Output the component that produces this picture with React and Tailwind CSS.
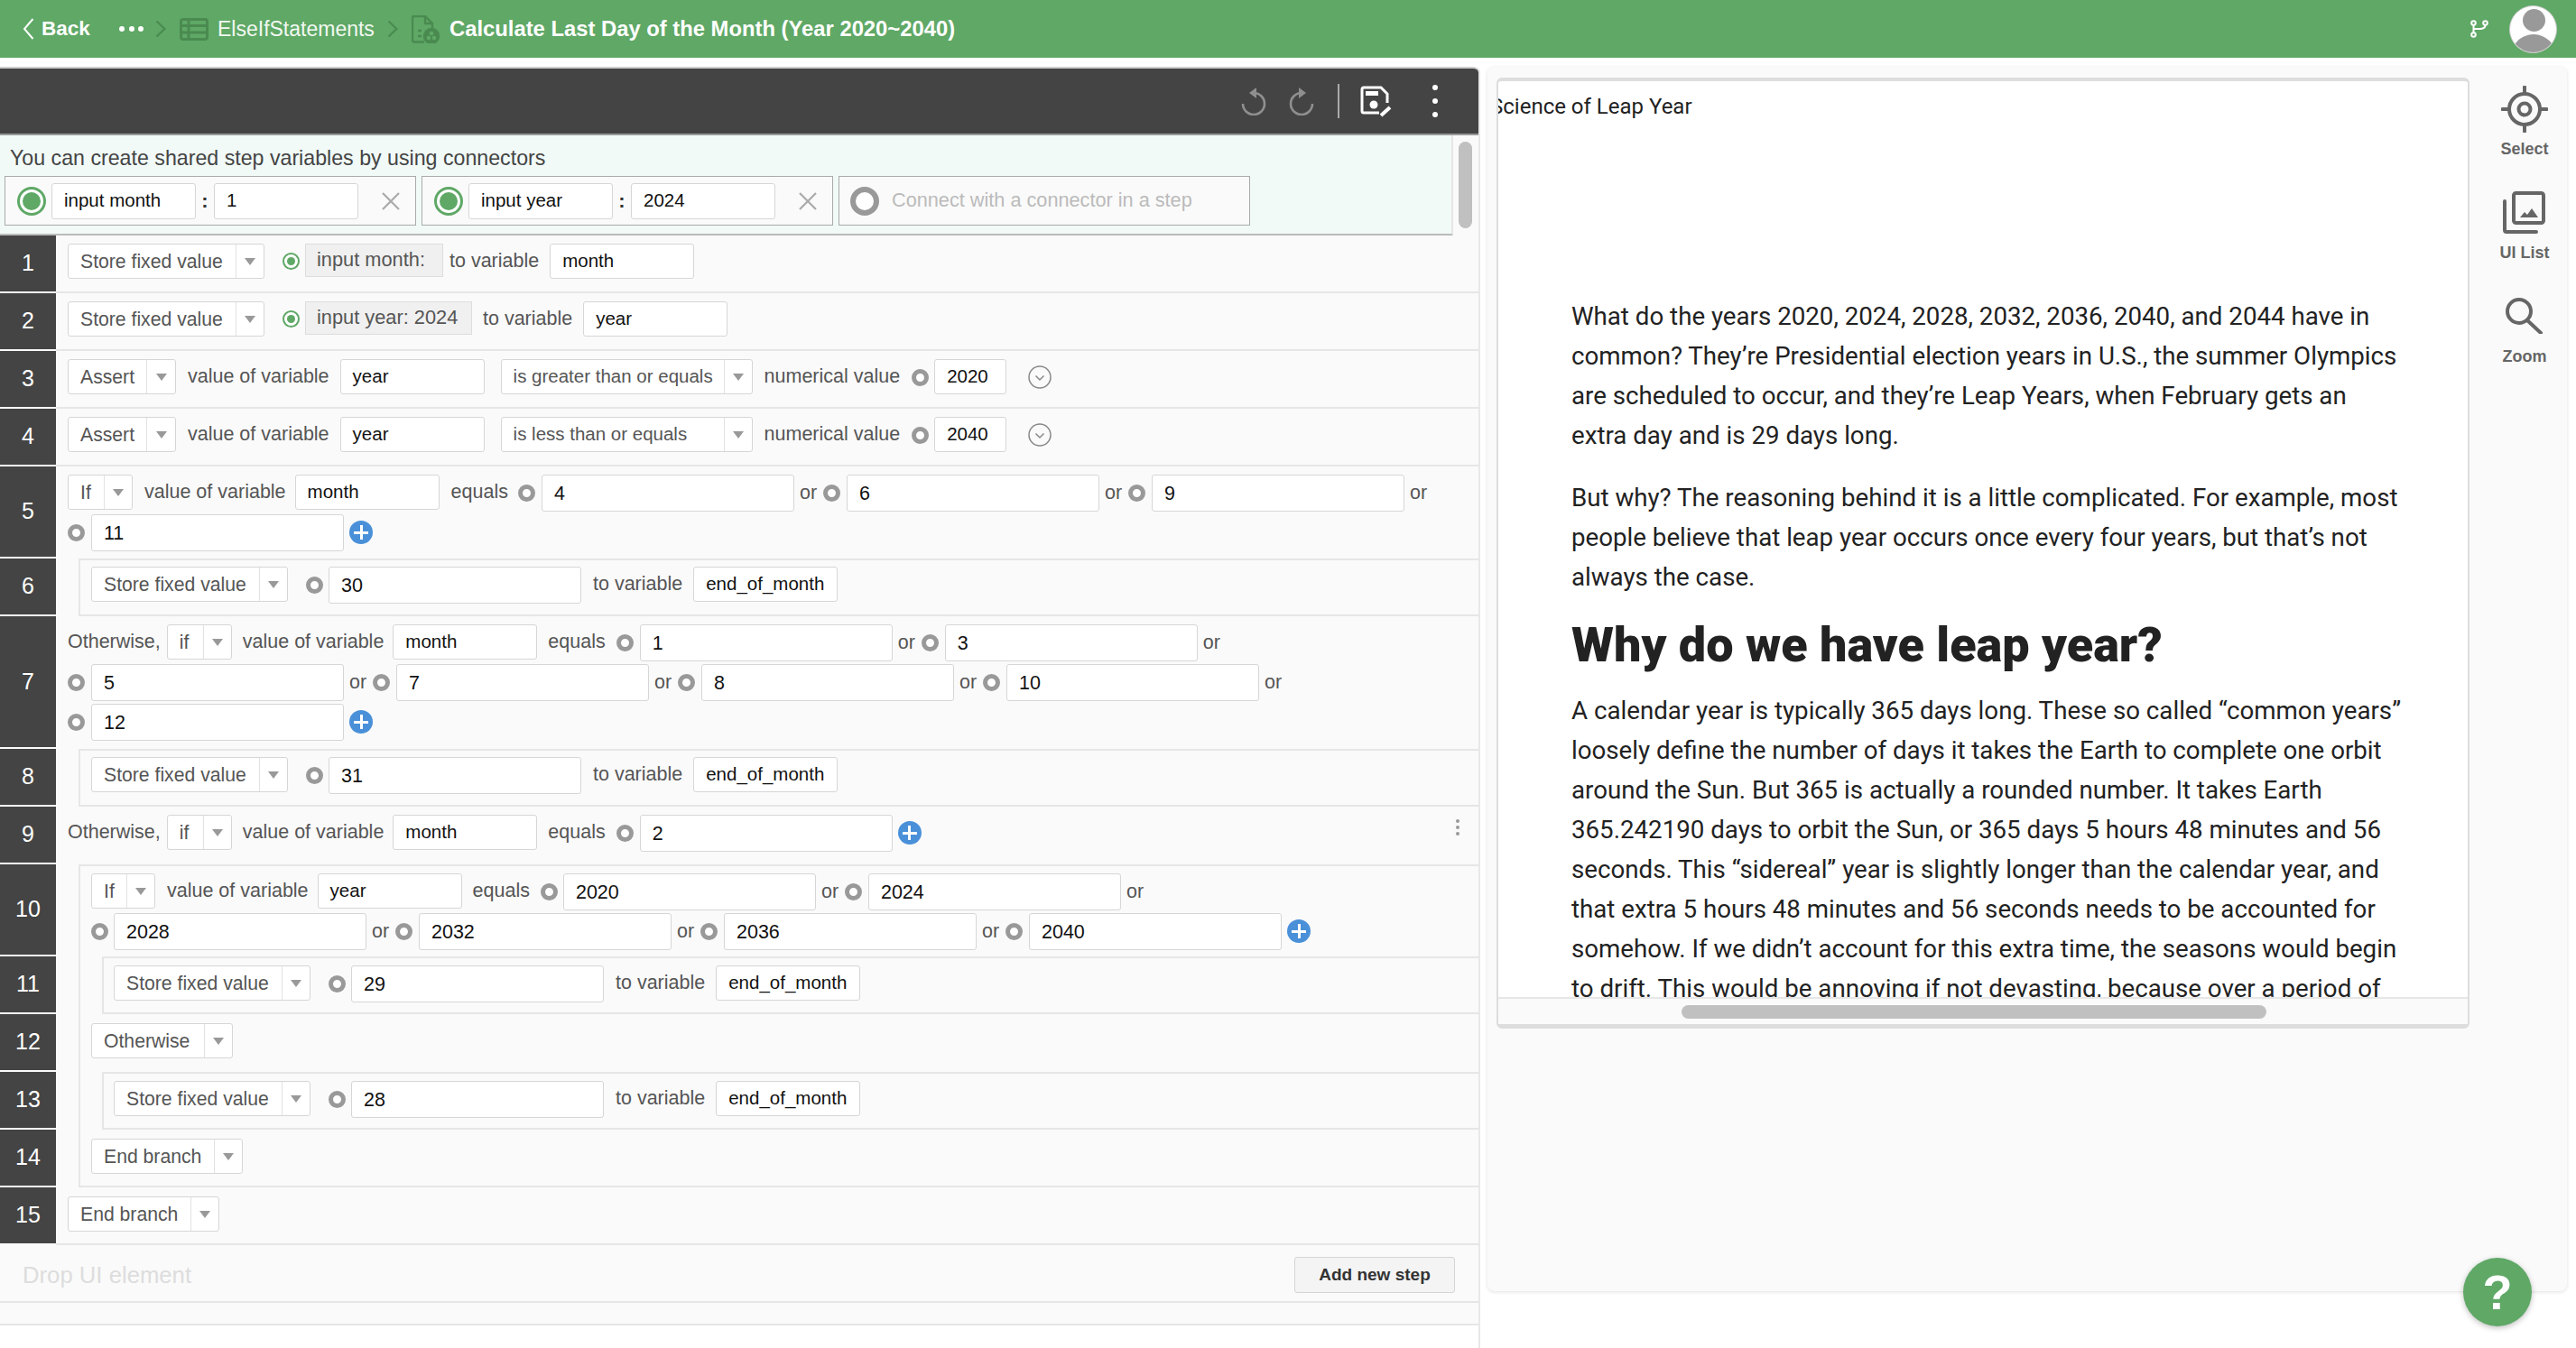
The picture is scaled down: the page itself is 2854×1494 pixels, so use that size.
import React from "react";

const Dot = ({ ml = 0 }) => (
  <span className="w-[19px] h-[19px] mt-[11px] rounded-full border-[5px] border-[#999] bg-white shrink-0" style={ml ? { marginLeft: ml } : undefined} />
);
const GreenDot = () => (
  <span className="w-[19px] h-[19px] mt-[10px] rounded-full border-2 border-[#5fa866] bg-white shrink-0 flex items-center justify-center">
    <span className="w-[9px] h-[9px] rounded-full bg-[#5fa866]" />
  </span>
);
const Sel = ({ w, children, dv = 31, small }) => (
  <div className={"h-[39px] bg-white border border-[#d6d6d6] rounded-[3px] flex items-center shrink-0 text-[#555] leading-none whitespace-nowrap " + (small ? "text-[20.5px]" : "text-[21.2px]")} style={{ width: w }}>
    <span className="flex-1 pl-[13px]">{children}</span>
    <span className="h-full border-l border-[#e2e2e2] flex items-center justify-center shrink-0" style={{ width: dv }}>
      <span className="w-0 h-0 border-l-[6px] border-r-[6px] border-t-[8px] border-l-transparent border-r-transparent border-t-[#999]" />
    </span>
  </div>
);
const Var = ({ w = 160, children }) => (
  <div className="h-[39px] bg-white border border-[#d6d6d6] rounded-[3px] flex items-center pl-[13px] shrink-0 text-[#111] text-[20.5px] leading-none whitespace-nowrap" style={{ width: w }}>{children}</div>
);
const Val = ({ w = 280, children }) => (
  <div className="h-[41px] bg-white border border-[#d6d6d6] rounded-[3px] flex items-center pl-[13px] pt-[3px] shrink-0 text-[#111] text-[21.5px] leading-none" style={{ width: w }}>{children}</div>
);
const L = ({ children }) => (
  <span className="h-[39px] flex items-center text-[#555] text-[21.5px] leading-none whitespace-nowrap shrink-0">{children}</span>
);
const Or = () => <span className="h-[41px] w-[19px] flex items-center text-[#555] text-[21.5px] leading-none pt-[1px] shrink-0">or</span>;
const Plus = () => (
  <span className="w-[26px] h-[26px] mt-[7px] rounded-full bg-[#4a90d9] relative shrink-0">
    <span className="absolute left-[5px] right-[5px] top-[11.5px] h-[3px] bg-white" />
    <span className="absolute top-[5px] bottom-[5px] left-[11.5px] w-[3px] bg-white" />
  </span>
);
const Chev = () => (
  <svg width="28" height="28" viewBox="0 0 28 28" fill="none" stroke="#888" strokeWidth="1.5" className="shrink-0">
    <circle cx="14" cy="14" r="12" />
    <path d="M9.5 12.5 14 17l4.5-4.5" />
  </svg>
);
const Line = ({ children, className = "" }) => <div className={"flex items-start " + className}>{children}</div>;

const Row = ({ n, h = 64, nest = 0, bt, bb, pt = 9, children }) => {
  let inner = (
    <div className={"flex-1 min-w-0 h-full " + (bt ? "border-t-2 border-[#e6e6e6] " : "") + (bb ? "border-b-2 border-[#e6e6e6] " : "") + (nest >= 2 ? "pl-[11px]" : nest === 1 ? "pl-[12px]" : "pl-[13px]")} style={{ paddingTop: bt ? pt - 2 : pt }}>
      {children}
    </div>
  );
  if (nest >= 2) inner = <div className="flex-1 h-full ml-[24px] border-l-2 border-[#e6e6e6] flex">{inner}</div>;
  if (nest >= 1) inner = <div className="flex-1 h-full ml-[25px] border-l-2 border-[#e6e6e6] flex">{inner}</div>;
  return (
    <div className="flex relative" style={{ height: h }}>
      <div className="w-[62px] shrink-0 bg-[#444] mb-[2px] flex items-center justify-center text-white text-[25px]">{n}</div>
      {inner}
    </div>
  );
};

const G = ({ w }) => <span className="shrink-0" style={{ width: w }} />;
const Store = ({ v }) => (
  <Line>
    <Sel w={218}>Store fixed value</Sel>
    <Dot ml={20} />
    <G w={6} />
    <Val>{v}</Val>
    <G w={13} />
    <L>to variable</L>
    <G w={12} />
    <Var>end_of_month</Var>
  </Line>
);
const OrSeq = ({ items }) =>
  items.map((v, i) => (
    <React.Fragment key={i}>
      <G w={6} />
      <Or />
      <G w={7} />
      <Dot />
      <G w={7} />
      <Val>{v}</Val>
    </React.Fragment>
  ));

const ToolIcon = ({ children, label, mt, gap }) => (
  <div className="flex flex-col items-center" style={{ marginTop: mt }}>
    {children}
    <span className="text-[#666] text-[18px] leading-[18px] font-bold" style={{ marginTop: gap }}>{label}</span>
  </div>
);

const Box = ({ name, val }) => (
  <div className="w-[456px] h-[55px] border border-[#aaa] bg-[#fafafa] flex items-center shrink-0">
    <span className="ml-[13px] w-[32px] h-[32px] rounded-full border-[3px] border-[#5fa866] bg-white flex items-center justify-center shrink-0">
      <span className="w-[20px] h-[20px] rounded-full bg-[#5fa866]" />
    </span>
    <span className="ml-[6px] w-[160px] h-[40px] bg-white border border-[#d6d6d6] rounded-[3px] flex items-center pl-[13px] text-[#111] text-[20.5px]">{name}</span>
    <span className="w-[20px] text-center text-[#333] text-[22px] font-bold">:</span>
    <span className="w-[160px] h-[40px] bg-white border border-[#d6d6d6] rounded-[3px] flex items-center pl-[13px] text-[#111] text-[20.5px]">{val}</span>
    <svg width="22" height="22" viewBox="0 0 22 22" stroke="#aaa" strokeWidth="2.2" className="ml-[25px]"><path d="M2 2l18 18M20 2L2 20" /></svg>
  </div>
);

const Chevron = ({ ml }) => (
  <svg width="12" height="20" viewBox="0 0 12 20" fill="none" stroke="#4a8a50" strokeWidth="2.2" style={{ marginLeft: ml }} className="shrink-0"><path d="M1.5 1.5 10.5 10 1.5 18.5" /></svg>
);
const MenuDots = () => (
  <>
    <i className="w-[6px] h-[6px] rounded-full bg-white" /><i className="w-[6px] h-[6px] rounded-full bg-white" /><i className="w-[6px] h-[6px] rounded-full bg-white" />
  </>
);

export default function App() {
  return (
    <div className="w-[2854px] h-[1494px] bg-white overflow-hidden font-['Liberation_Sans',Arial,sans-serif] relative">
      {/* header */}
      <div className="h-[64px] bg-[#5fa866] flex items-center text-white">
        <svg width="13" height="26" viewBox="0 0 13 26" fill="none" stroke="#fff" strokeWidth="2" className="ml-[25px] shrink-0"><path d="M11.5 2 2 13l9.5 11" /></svg>
        <span className="ml-[8px] w-[54px] text-[22.5px] font-bold">Back</span>
        <span className="ml-[32px] w-[27px] flex justify-between shrink-0"><MenuDots /></span>
        <Chevron ml={13} />
        <svg width="32" height="25" viewBox="0 0 32 25" fill="none" stroke="#4a8a50" strokeWidth="3" className="ml-[15px] shrink-0"><rect x="1.5" y="1.5" width="29" height="22" rx="2.5" /><path d="M1.5 8.5h29M1.5 16h29M10 1.5v22" /></svg>
        <span className="ml-[10px] w-[174px] text-[23px] text-[#f1f8f1] whitespace-nowrap">ElseIfStatements</span>
        <Chevron ml={14} />
        <svg width="31" height="31" viewBox="0 0 31 31" fill="none" stroke="#4a8a50" strokeWidth="2.4" className="ml-[15px] shrink-0"><path d="M14 29.5H3a2 2 0 0 1-2-2V3a2 2 0 0 1 2-2h12l8 8v7M15 1v8h8M7 17h4M7 23h4" /><circle cx="22" cy="23" r="8" fill="#4a8a50" /><circle cx="22" cy="20" r="2.3" fill="#5fa866" stroke="none" /><circle cx="19" cy="25" r="2.3" fill="#5fa866" stroke="none" /><circle cx="25" cy="25" r="2.3" fill="#5fa866" stroke="none" /></svg>
        <span className="ml-[11px] text-[23.8px] font-bold whitespace-nowrap">Calculate Last Day of the Month (Year 2020~2040)</span>
        <span className="flex-1" />
        <svg width="20" height="20" viewBox="0 0 20 20" fill="none" stroke="#fff" strokeWidth="2"><circle cx="3.5" cy="3.5" r="2.3" /><circle cx="3.5" cy="16.5" r="2.3" /><circle cx="16.5" cy="3.5" r="2.3" /><path d="M3.5 6v8M16.5 6c0 5-8 4-13 4" /></svg>
        <div className="ml-[23px] mr-[21px] w-[53px] h-[53px] rounded-full bg-white overflow-hidden relative shrink-0 border border-[#ccc]">
          <span className="absolute left-[14px] top-[3px] w-[25px] h-[25px] rounded-full bg-[#999]" />
          <span className="absolute left-[1px] top-[31px] w-[50px] h-[50px] rounded-full bg-[#999]" />
        </div>
      </div>
      <div className="flex pt-[10px]">
        {/* left panel */}
        <div className="w-[1640px] shrink-0 h-[1420px] border-r-2 border-[#e8e8e8] relative bg-white rounded-tr-[6px]">
          <div className="h-[76px] bg-[#444] border-t-2 border-b-2 border-t-[#ccc] border-b-[#999] rounded-tr-[6px] flex items-center justify-end">
            <svg width="30" height="32" viewBox="0 0 30 32" fill="none" stroke="#8f8f8f" strokeWidth="2.6"><path d="M14 7a12 12 0 1 1-12 12" /><path d="M17 1 9 7l8 6z" fill="#8f8f8f" stroke="none" /></svg>
            <svg width="30" height="32" viewBox="0 0 30 32" fill="none" stroke="#8f8f8f" strokeWidth="2.6" className="ml-[21px]"><path d="M16 7a12 12 0 1 0 12 12" /><path d="M13 1l8 6-8 6z" fill="#8f8f8f" stroke="none" /></svg>
            <span className="ml-[26px] h-[38px] border-l-2 border-[#aaa]" />
            <svg width="38" height="36" viewBox="0 0 38 36" fill="none" className="ml-[22px]"><path d="M22 31H5a2 2 0 0 1-2-2V5a2 2 0 0 1 2-2h19l7 7v10" stroke="#fff" strokeWidth="3" /><rect x="7" y="7" width="14" height="5" fill="#fff" /><circle cx="16" cy="22" r="4.5" fill="#fff" /><path d="M24 34l10-9" stroke="#fff" strokeWidth="4" /></svg>
            <span className="ml-[43px] mr-[45px] flex flex-col gap-[9px] items-center">
              <MenuDots />
            </span>
          </div>
          <div className="bg-[#fafafa]">
            {/* banner */}
            <div className="w-[1610px] h-[111px] bg-[#f1faf7] border-b-2 border-r-2 border-b-[#bbb] border-r-[#e6e6e6] px-[5px] pt-[12px]">
              <div className="pl-[6px] h-[27px] text-[#444] text-[23.2px] leading-[27px]">You can create shared step variables by using connectors</div>
              <div className="flex gap-[6px] mt-[6px]">
                <Box name="input month" val="1" />
                <Box name="input year" val="2024" />
                <div className="w-[456px] h-[55px] border border-[#aaa] bg-[#fafafa] flex items-center shrink-0">
                  <span className="ml-[12px] w-[32px] h-[32px] rounded-full border-[6px] border-[#999] bg-white shrink-0" />
                  <span className="ml-[14px] text-[#bbb] text-[21.7px]">Connect with a connector in a step</span>
                </div>
              </div>
            </div>
            {/* scrollbar */}
            <div className="absolute left-[1616px] top-[83px] w-[15px] h-[96px] rounded-full bg-[#c0c0c0]" />
            <Row n="1" bb>
              <Line>
                <Sel w={218}>Store fixed value</Sel>
                <G w={20} /><GreenDot />
                <span className="ml-[6px] w-[153px] h-[37px] bg-[#f0f0f0] border border-[#ddd] flex items-center pl-[12px] text-[#555] text-[21.8px] whitespace-nowrap">input month:</span>
                <G w={7} /><L>to variable</L><G w={12} /><Var>month</Var>
              </Line>
            </Row>
            <Row n="2" bb>
              <Line>
                <Sel w={218}>Store fixed value</Sel>
                <G w={20} /><GreenDot />
                <span className="ml-[6px] w-[185px] h-[37px] bg-[#f0f0f0] border border-[#ddd] flex items-center pl-[12px] text-[#555] text-[21.8px] whitespace-nowrap">input year: 2024</span>
                <G w={12} /><L>to variable</L><G w={12} /><Var>year</Var>
              </Line>
            </Row>
            <Row n="3" bb>
              <Line>
                <Sel w={120} dv={32}>Assert</Sel><G w={13} /><L>value of variable</L><G w={12} /><Var>year</Var><G w={18} />
                <Sel w={279} small>is greater than or equals</Sel><G w={13} /><L>numerical value</L><G w={13} /><Dot /><G w={6} /><Var w={80}>2020</Var><G w={23} />
                <span className="mt-[6px]"><Chev /></span>
              </Line>
            </Row>
            <Row n="4" bb>
              <Line>
                <Sel w={120} dv={32}>Assert</Sel><G w={13} /><L>value of variable</L><G w={12} /><Var>year</Var><G w={18} />
                <Sel w={279} small>is less than or equals</Sel><G w={13} /><L>numerical value</L><G w={13} /><Dot /><G w={6} /><Var w={80}>2040</Var><G w={23} />
                <span className="mt-[6px]"><Chev /></span>
              </Line>
            </Row>
            <Row n="5" h={102}>
              <Line>
                <Sel w={72}>If</Sel><G w={13} /><L>value of variable</L><G w={10} /><Var>month</Var><G w={13} /><L>equals</L><G w={11} /><Dot /><G w={7} /><Val>4</Val>
                <OrSeq items={["6", "9"]} /><G w={6} /><Or />
              </Line>
              <Line className="mt-[3px]"><Dot /><G w={7} /><Val>11</Val><G w={6} /><Plus /></Line>
            </Row>
            <Row n="6" nest={1} bt bb pt={9}><Store v="30" /></Row>
            <Row n="7" h={147}>
              <Line>
                <L>Otherwise,</L><G w={7} /><Sel w={72}>if</Sel><G w={12} /><L>value of variable</L><G w={10} /><Var>month</Var><G w={12} /><L>equals</L><G w={12} /><Dot /><G w={7} /><Val>1</Val>
                <OrSeq items={["3"]} /><G w={6} /><Or />
              </Line>
              <Line className="mt-[3px]"><Dot /><G w={7} /><Val>5</Val><OrSeq items={["7", "8", "10"]} /><G w={6} /><Or /></Line>
              <Line className="mt-[3px]"><Dot /><G w={7} /><Val>12</Val><G w={6} /><Plus /></Line>
            </Row>
            <Row n="8" nest={1} bt bb pt={9}><Store v="31" /></Row>
            <Row n="9">
              <Line>
                <L>Otherwise,</L><G w={7} /><Sel w={72}>if</Sel><G w={12} /><L>value of variable</L><G w={10} /><Var>month</Var><G w={12} /><L>equals</L><G w={12} /><Dot /><G w={7} /><Val>2</Val><G w={6} /><Plus />
              </Line>
              <span className="absolute left-[1613px] top-[14px] flex flex-col gap-[3px]">
                <i className="w-[4px] h-[4px] rounded-full bg-[#999]" /><i className="w-[4px] h-[4px] rounded-full bg-[#999]" /><i className="w-[4px] h-[4px] rounded-full bg-[#999]" />
              </span>
            </Row>
            <Row n="10" h={102} nest={1} bt pt={10}>
              <Line>
                <Sel w={71}>If</Sel><G w={13} /><L>value of variable</L><G w={10} /><Var>year</Var><G w={12} /><L>equals</L><G w={12} /><Dot /><G w={6} /><Val>2020</Val>
                <OrSeq items={["2024"]} /><G w={6} /><Or />
              </Line>
              <Line className="mt-[3px]"><Dot /><G w={6} /><Val>2028</Val><OrSeq items={["2032", "2036", "2040"]} /><G w={6} /><Plus /></Line>
            </Row>
            <Row n="11" nest={2} bt bb pt={10}><Store v="29" /></Row>
            <Row n="12" nest={1} pt={10}><Sel w={157}>Otherwise</Sel></Row>
            <Row n="13" nest={2} bt bb pt={10}><Store v="28" /></Row>
            <Row n="14" nest={1} bb pt={10}><Sel w={168}>End branch</Sel></Row>
            <Row n="15" bb pt={10}><Sel w={168}>End branch</Sel></Row>
            {/* drop row */}
            <div className="h-[64px] border-b-2 border-[#e6e6e6] flex items-center relative pt-[4px]">
              <span className="ml-[25px] text-[#ddd] text-[25.7px]">Drop UI element</span>
              <span className="absolute left-[1434px] top-[13px] w-[178px] h-[40px] bg-[#f4f4f4] border border-[#d4d4d4] rounded-[3px] flex items-center justify-center text-[#333] text-[19px] font-bold">Add new step</span>
            </div>
            <div className="h-[25px] border-b-2 border-[#e6e6e6]" />
          </div>
        </div>
        {/* right panel */}
        <div className="ml-[8px] w-[1196px] h-[1357px] bg-[#fafafa] rounded-[8px] shadow-[0_1px_4px_rgba(0,0,0,0.12)] flex pl-[10px] pt-[12px]">
          <div className="w-[1078px] h-[1054px] bg-white border-x-2 border-t-4 border-b-[5px] border-[#ddd] rounded-[6px] flex flex-col overflow-hidden shrink-0">
            <div className="flex-1 overflow-hidden font-['Roboto',sans-serif] text-[#222] text-[27.7px] leading-[44px] min-h-0">
              <div className="ml-[-9px] mt-[6px] h-[233px] whitespace-nowrap text-[24px]">Science of Leap Year</div>
              <div className="pl-[81px]">
                <p className="whitespace-nowrap">What do the years 2020, 2024, 2028, 2032, 2036, 2040, and 2044 have in<br />common? They’re Presidential election years in U.S., the summer Olympics<br />are scheduled to occur, and they’re Leap Years, when February gets an<br />extra day and is 29 days long.</p>
                <p className="whitespace-nowrap mt-[25px]">But why? The reasoning behind it is a little complicated. For example, most<br />people believe that leap year occurs once every four years, but that’s not<br />always the case.</p>
                <h2 className="font-black text-[54px] leading-[56px] mt-[25px] text-[#222]">Why do we have leap year?</h2>
                <p className="whitespace-nowrap mt-[23px]">A calendar year is typically 365 days long. These so called “common years”<br />loosely define the number of days it takes the Earth to complete one orbit<br />around the Sun. But 365 is actually a rounded number. It takes Earth<br />365.242190 days to orbit the Sun, or 365 days 5 hours 48 minutes and 56<br />seconds. This “sidereal” year is slightly longer than the calendar year, and<br />that extra 5 hours 48 minutes and 56 seconds needs to be accounted for<br />somehow. If we didn’t account for this extra time, the seasons would begin<br />to drift. This would be annoying if not devasting, because over a period of</p>
              </div>
            </div>
            <div className="h-[30px] border-t-2 border-[#e6e6e6] bg-[#fafafa] shrink-0 pt-[7px]">
              <div className="ml-[203px] w-[648px] h-[15px] rounded-full bg-[#c0c0c0]" />
            </div>
          </div>
          <div className="flex-1 flex flex-col items-center pl-[14px]">
            <ToolIcon label="Select" mt={9} gap={9}>
              <svg width="52" height="52" viewBox="0 0 52 52" fill="none" stroke="#666" strokeWidth="4"><circle cx="26" cy="26" r="17" /><circle cx="26" cy="26" r="6.5" /><path d="M26 1.5v6M26 44.5v6M1.5 26h6M44.5 26h6" strokeLinecap="round" /></svg>
            </ToolIcon>
            <ToolIcon label="UI List" mt={38} gap={12}>
              <svg width="47" height="47" viewBox="0 0 47 47" fill="none" stroke="#666" strokeWidth="4"><rect x="12" y="2" width="33" height="33" rx="2.5" /><path d="M2 11v32a2 2 0 0 0 2 2h33" strokeLinecap="round" /><path d="M19 29l5-6 3 3 5-7 7 10z" fill="#666" stroke="none" /></svg>
            </ToolIcon>
            <ToolIcon label="Zoom" mt={41} gap={16}>
              <svg width="42" height="40" viewBox="0 0 42 40" fill="none" stroke="#666" strokeWidth="4"><circle cx="15" cy="15" r="13" /><path d="M24 25l15 14" strokeLinecap="round" /></svg>
            </ToolIcon>
          </div>
        </div>
      </div>
      {/* help */}
      <div className="absolute left-[2729px] top-[1394px] w-[76px] h-[76px] rounded-full bg-[#5fa866] shadow-[0_2px_6px_rgba(0,0,0,0.25)] flex items-center justify-center text-white text-[54px] font-bold">?</div>
    </div>
  );
}
